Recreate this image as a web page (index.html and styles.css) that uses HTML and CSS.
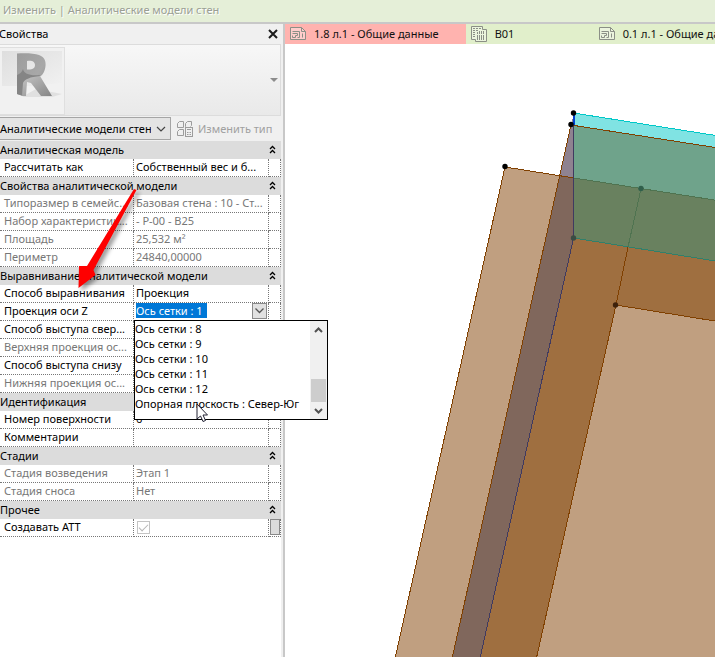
FILE: index.html
```
<!DOCTYPE html>
<html lang="ru">
<head>
<meta charset="utf-8">
<title>Аналитические модели стен</title>
<link rel="stylesheet" href="styles.css">
</head>
<body>
<header class="context-bar">Изменить | Аналитические модели стен</header>
<div class="workspace">
  <aside class="properties">
    <div class="panel-title">
      <h1>Свойства</h1>
      <button class="close" type="button" aria-label="Закрыть">
        <svg width="10" height="10" viewBox="0 0 10 10"><path d="M1 1L9 9M9 1L1 9" stroke="#1c1c1c" stroke-width="2"/></svg>
      </button>
    </div>
    <button class="type-selector" type="button" aria-label="Выбор типа">
      <span class="preview">
        <svg width="60" height="60" viewBox="0 0 60 60">
          <defs>
            <linearGradient id="sky" x1="0" y1="0" x2="1" y2="1"><stop offset="0" stop-color="#dedede"/><stop offset="1" stop-color="#f1f1f1"/></linearGradient>
            <linearGradient id="face" x1="0" y1="0" x2="1" y2="1"><stop offset="0" stop-color="#9c9c9c"/><stop offset=".6" stop-color="#a8a8a8"/><stop offset="1" stop-color="#8c8c8c"/></linearGradient>
            <linearGradient id="leg" x1="0" y1="0" x2="1" y2="1"><stop offset="0" stop-color="#c4c4c4"/><stop offset="1" stop-color="#858585"/></linearGradient>
          </defs>
          <rect width="60" height="60" fill="#f1f1f1"/>
          <path d="M0 0H60V32L30 35H0Z" fill="url(#sky)"/>
          <path d="M20 46L34 38L60 43L50 46Z" fill="#e0e0e0"/>
          <path fill-rule="evenodd" d="M15 2.500C22 2 32 2 37 4C43 6 44 11 43.500 15C43 20 41 24 38 25.500L29 27L21 31V45L15 43ZM25 10V18.500C29 19 33 18 33 14C33 10 29 9 25 10Z" fill="url(#face)"/>
          <path d="M15 24C18 23 20 21 21 18C22 23 28 25 38 24L37 26C31 27 26 27 23 31L21 45L15 43Z" fill="#858585"/>
          <path d="M20 45L21 32C23 28 28 26 38 25L50 45H39L29 32L25 31L24 45Z" fill="url(#leg)"/>
        </svg>
      </span>
      <svg class="drop-mark" width="8" height="4" viewBox="0 0 8 4"><path d="M0 0H8L4 4Z" fill="#8c8c8c"/></svg>
    </button>
    <div class="filter-row">
      <div class="filter">
        <select aria-label="Фильтр категорий"><option>Аналитические модели стен</option></select>
        <svg width="10" height="6" viewBox="0 0 10 6"><path d="M1 1L5 5L9 1" fill="none" stroke="#444" stroke-width="1.2"/></svg>
      </div>
      <button class="edit-type" type="button" disabled>
        <svg width="16" height="16" viewBox="0 0 16 16" fill="none" stroke="#9c9c9c">
          <path d="M.5 2.500L2.500 .5H6.500V6.500H.5ZM8.500 5.500V2.500L10.500 .5H14.500V4.500L13.500 5.500M8.500 5.500H9M.5 10.500L2.500 8.500H6.500M.5 10.500V14.500H6.500V8.500"/>
          <rect x="8.500" y="6.500" width="7" height="9"/><path d="M10 8.500H14M10 11.500H11.500M12.500 11.500H14M10 13.500H11.500M12.500 13.500H14"/>
        </svg>
        <span>Изменить тип</span>
      </button>
    </div>

    <svg class="defs" width="0" height="0" aria-hidden="true"><symbol id="fold" viewBox="0 0 7 9"><path d="M1 4L3.500 1.500L6 4M1 8L3.500 5.500L6 8" fill="none" stroke="#000" stroke-width="1.300"/></symbol></svg>
    <table class="grid">
      <colgroup><col class="col-name"><col class="col-value"><col class="col-link"></colgroup>
      <tbody>
        <tr class="group"><th colspan="2">Аналитическая модель</th><td><button type="button" aria-label="Свернуть"><svg><use href="#fold"/></svg></button></td></tr>
        <tr><th>Рассчитать как</th><td>Собственный вес и б...</td><td></td></tr>
        <tr class="group"><th colspan="2">Свойства аналитической модели</th><td><button type="button" aria-label="Свернуть"><svg><use href="#fold"/></svg></button></td></tr>
        <tr class="readonly"><th>Типоразмер в семейс...</th><td>Базовая стена : 10 - Ст...</td><td></td></tr>
        <tr class="readonly"><th>Набор характеристик...</th><td>- Р-00 - В25</td><td></td></tr>
        <tr class="readonly"><th>Площадь</th><td>25,532 м²</td><td></td></tr>
        <tr class="readonly"><th>Периметр</th><td>24840,00000</td><td></td></tr>
        <tr class="group"><th colspan="2">Выравнивание аналитической модели</th><td><button type="button" aria-label="Свернуть"><svg><use href="#fold"/></svg></button></td></tr>
        <tr><th>Способ выравнивания</th><td>Проекция</td><td></td></tr>
        <tr>
          <th><label for="axis-z">Проекция оси Z</label></th>
          <td class="editing">
            <div class="combo">
              <input id="axis-z" type="text" value="Ось сетки : 1">
              <button type="button" aria-label="Открыть список"><svg width="9" height="6" viewBox="0 0 9 6"><path d="M.5 .5L4.500 4.500L8.500 .5" fill="none" stroke="#555" stroke-width="1.300"/></svg></button>
            </div>
            <div class="dropdown">
              <ul role="listbox" aria-label="Проекция оси Z">
                <li role="option">Ось сетки : 8</li>
                <li role="option">Ось сетки : 9</li>
                <li role="option">Ось сетки : 10</li>
                <li role="option">Ось сетки : 11</li>
                <li role="option">Ось сетки : 12</li>
                <li role="option">Опорная плоскость : Север-Юг</li>
              </ul>
              <div class="scrollbar">
                <button type="button" aria-label="Вверх"><svg width="9" height="6" viewBox="0 0 9 6"><path d="M1 5L4.500 1.500L8 5" fill="none" stroke="#505050" stroke-width="2"/></svg></button>
                <span class="thumb"></span>
                <button type="button" aria-label="Вниз"><svg width="9" height="6" viewBox="0 0 9 6"><path d="M1 1L4.500 4.500L8 1" fill="none" stroke="#505050" stroke-width="2"/></svg></button>
              </div>
              <svg class="cursor" width="13" height="20" viewBox="0 0 13 20"><path d="M1 1V16L4.500 13L7 18.500L9.500 17.500L7 12H11.500Z" fill="#fff" stroke="#223" stroke-width="1"/></svg>
            </div>
          </td>
          <td></td>
        </tr>
        <tr><th>Способ выступа свер...</th><td></td><td></td></tr>
        <tr class="readonly"><th>Верхняя проекция ос...</th><td></td><td></td></tr>
        <tr><th>Способ выступа снизу</th><td></td><td></td></tr>
        <tr class="readonly"><th>Нижняя проекция ос...</th><td></td><td></td></tr>
        <tr class="group"><th colspan="2">Идентификация</th><td><button type="button" aria-label="Свернуть"><svg><use href="#fold"/></svg></button></td></tr>
        <tr><th>Номер поверхности</th><td>6</td><td></td></tr>
        <tr><th>Комментарии</th><td></td><td></td></tr>
        <tr class="group"><th colspan="2">Стадии</th><td><button type="button" aria-label="Свернуть"><svg><use href="#fold"/></svg></button></td></tr>
        <tr class="readonly"><th>Стадия возведения</th><td>Этап 1</td><td></td></tr>
        <tr class="readonly"><th>Стадия сноса</th><td>Нет</td><td></td></tr>
        <tr class="group"><th colspan="2">Прочее</th><td><button type="button" aria-label="Свернуть"><svg><use href="#fold"/></svg></button></td></tr>
        <tr><th><label for="att">Создавать АТТ</label></th><td><input id="att" class="check" type="checkbox" checked disabled></td><td><button class="link" type="button" aria-label="Связать с параметром"></button></td></tr>
      </tbody>
    </table>
    <svg class="arrow" width="80" height="120" viewBox="0 0 80 120">
      <path d="M65.500 4L22.500 84L24.500 89L7.500 102L8 80L16 80L63 3Z" fill="#fe0000"/>
    </svg>
  </aside>

  <main class="document">
    <svg class="defs" width="0" height="0" aria-hidden="true">
      <symbol id="sheet" viewBox="0 0 16 14"><path d="M.5 .5H11.500L15.500 4.500V12.500H.5Z" fill="#fff" fill-opacity=".35"/><path d="M11.500 .5V4.500H15.500M2.500 4.500H9.500V10.500H7.500M2.500 6.500H7.500V8.500H5.500V10.500H2.500V8.500M12.500 6.500V10.500"/></symbol>
      <symbol id="schedule" viewBox="0 0 16 16"><path d="M.5 .5H11.500V3.500H15.500V15.500H4.500V13.500H.5Z" fill="#fff" fill-opacity=".35"/><path d="M2 2.500H4M5 2.500H7M8 2.500H10M2 4.500H4M5 4.500H7M2 6.500H4M2 8.500H4M2 10.500H4M6.500 6V8M8.500 5V8M10.500 5V8M12.500 5V8M6.500 9V14M8.500 9V14M10.500 9V14M12.500 9V14"/></symbol>
    </svg>
    <nav class="tabs">
      <a class="tab active" href="#"><svg width="16" height="14"><use href="#sheet"/></svg><span>1.8 л.1 - Общие данные</span></a>
      <a class="tab" href="#"><svg width="16" height="16"><use href="#schedule"/></svg><span>В01</span></a>
      <a class="tab" href="#"><svg width="16" height="14"><use href="#sheet"/></svg><span>0.1 л.1 - Общие данные</span></a>
    </nav>
    <div class="view">
      <svg width="100%" height="100%" shape-rendering="crispEdges">
        <g transform="translate(-285 -44)">
          <path d="M505 167L559.500 175.500L341 1157H283.500Z" fill="#c09f80"/>
          <path d="M571 125L574 113V178L559.500 175.500Z" fill="#8f8290"/>
          <path d="M559.500 175.500L574 178V238L369 1157H341Z" fill="#80675c"/>
          <path d="M574 238L1715 424V1157H369Z" fill="#9f6f40"/>
          <path d="M616 305L1715 483V1157H424Z" fill="#c09f80"/>
          <path d="M574 113L1715 293.500V303.500L574 125.500Z" fill="#80e3e3"/>
          <path d="M574 125.500L1715 303.500V357L574 178Z" fill="#6fa38b"/>
          <path d="M574 178L1715 357V424L574 238Z" fill="#69815f"/>
          <g fill="none" stroke="#804000">
            <path d="M283.500 1157L505 167L574 178M341 1157L571 125L1715 303.500"/>
            <path d="M424 1157L616 305L1715 483M616 305L628 247"/>
          </g>
          <path d="M574 178L1715 357M641 189L628 247" fill="none" stroke="#4f7350"/>
          <path d="M574 238L1715 424" stroke="#30806b"/>
          <path d="M573.500 113L1715 293.500" stroke="#00c8c8"/>
          <path d="M573.500 125V238L369 1157" fill="none" stroke="#403a60"/>
          <path d="M573.500 113V125" stroke="#0040d0" stroke-width="2"/>
          <g shape-rendering="auto">
            <circle cx="573.500" cy="113" r="2.700"/><circle cx="571" cy="124.500" r="2.700"/><circle cx="505" cy="166.500" r="2.700"/>
            <circle cx="641" cy="188.500" r="2.700" fill="#305f4b"/><circle cx="573.500" cy="238" r="2.700" fill="#3b4c43"/><circle cx="615.500" cy="305" r="2.700" fill="#3d210b"/>
          </g>
        </g>
      </svg>
    </div>
  </main>
</div>
</body>
</html>
```

FILE: styles.css
```
* {
  box-sizing: border-box;
}

body {
  margin: 0;
  min-height: 100vh;
  display: flex;
  flex-direction: column;
  background: #fff;
  color: #000;
  font: 11px/18px "Noto Sans", "Open Sans", sans-serif;
  overflow: hidden;
}

button,
input,
select {
  margin: 0;
  padding: 0;
  border: 0;
  background: none;
  color: inherit;
  font: inherit;
}

svg {
  display: block;
  flex: none;
}

.defs {
  position: absolute;
}

.context-bar {
  height: 24px;
  padding: 0 3px;
  border-bottom: 2px solid #c8c8c8;
  background: #e5efd8;
  color: #9b9f95;
  line-height: 20px;
  text-shadow: 1px 1px 0 #fff;
  white-space: nowrap;
}

.workspace {
  flex: 1;
  display: flex;
}

/* Properties palette */
.properties {
  position: relative;
  flex: none;
  width: 285px;
  padding-right: 2px;
  border-right: 2px solid #c8c8c8;
  background: linear-gradient(#f0f0f0, #f0f0f0) right / 2px 100% no-repeat #fff;
}

.panel-title {
  display: flex;
  align-items: center;
  justify-content: space-between;
  height: 20px;
  padding-right: 3px;
  background: #f0f0f0;
}

.panel-title h1 {
  margin: 0 0 0 -1px;
  font-size: 11px;
  font-weight: 400;
}

.type-selector {
  display: flex;
  align-items: center;
  justify-content: space-between;
  width: 100%;
  height: 72px;
  padding-right: 2px;
  border: 1px solid #dcdcdc;
  border-left: 0;
  background: linear-gradient(#f7f7f7, #e9e9e9);
}

.preview {
  align-self: flex-start;
  margin-top: 2px;
  padding: 3px 2px;
  border: 1px solid #dfdfdf;
  border-left: 0;
  background: #f1f1f1;
}

.filter-row {
  display: flex;
  align-items: center;
  gap: 6px;
  height: 25px;
  background: #f0f0f0;
}

.filter {
  display: flex;
  align-items: center;
  width: 171px;
  height: 23px;
  padding-right: 4px;
  border: 1px solid #a5a5a5;
  border-left: 0;
  background: #e4e4e4;
}

.filter select {
  flex: 1;
  min-width: 0;
  height: 21px;
  margin-right: 5px;
  appearance: none;
  overflow: hidden;
  text-overflow: clip;
}

.edit-type {
  display: flex;
  align-items: center;
  gap: 5px;
  color: #a0a0a0;
}

.grid {
  width: 281px;
  table-layout: fixed;
  border-collapse: separate;
  border-spacing: 0;
}

.col-name {
  width: 134px;
}

.col-link {
  width: 12px;
}

.grid th,
.grid td {
  height: 18px;
  padding: 0 0 0 2px;
  border-right: 1px dotted #777;
  border-bottom: 1px dotted #777;
  line-height: 15px;
  font-weight: 400;
  text-align: left;
  vertical-align: top;
  white-space: nowrap;
  overflow: hidden;
}

.grid th {
  padding-left: 4px;
}

.grid td:last-child {
  padding: 0;
}

.grid .readonly {
  color: #777;
}

.grid .group th,
.grid .group td {
  padding: 0;
  border: 0;
  background: #dcdcdc;
  line-height: 17px;
}

.group td button {
  display: block;
  padding-top: 4px;
}

.group td svg {
  width: 7px;
  height: 9px;
}

.grid .editing {
  position: relative;
  overflow: visible;
}

.combo {
  display: flex;
  justify-content: space-between;
  height: 17px;
  padding-right: 1px;
}

.combo input {
  width: 71px;
  height: 15px;
  background: #0078d7;
  color: #fff;
}

.combo button {
  display: flex;
  align-items: center;
  justify-content: center;
  width: 15px;
  height: 16px;
  border: 1px solid #8a8a8a;
  background: #e1e1e1;
}

.dropdown {
  position: absolute;
  z-index: 2;
  top: 17px;
  left: 0;
  display: flex;
  width: 194px;
  height: 100px;
  border: 1px solid #000;
  background: #fff;
}

.dropdown ul {
  flex: 1;
  min-width: 0;
  margin: 0;
  padding: 0;
  list-style: none;
}

.dropdown li {
  line-height: 15px;
}

.scrollbar {
  flex: none;
  display: flex;
  flex-direction: column;
  align-items: center;
  width: 17px;
  background: #f0f0f0;
}

.scrollbar button {
  display: flex;
  align-items: center;
  justify-content: center;
  width: 17px;
  height: 17px;
}

.thumb {
  width: 15px;
  height: 23px;
  margin-top: auto;
  background: #cdcdcd;
}

.cursor {
  position: absolute;
  top: 82px;
  left: 61px;
}

.check {
  display: block;
  width: 13px;
  height: 13px;
  margin: 2px 0 0 1px;
  border: 1px solid #c4c4c4;
  appearance: none;
  background: #fff;
}

.check:checked::after {
  content: "";
  display: block;
  width: 8px;
  height: 4px;
  margin: 2px 1px;
  border: solid #b5b5b5;
  border-width: 0 0 1px 1px;
  transform: rotate(-45deg);
}

.link {
  display: block;
  width: 10px;
  height: 16px;
  margin-left: 1px;
  border: 1px solid #8a8a8a;
  background: #dcdcdc;
}

.arrow {
  position: absolute;
  z-index: 1;
  top: 162px;
  left: 71px;
  filter: drop-shadow(3px 3px 2px rgba(0, 0, 0, 0.4));
  pointer-events: none;
}

/* Drawing area */
.document {
  flex: 1;
  min-width: 0;
  display: flex;
  flex-direction: column;
}

.tabs {
  display: flex;
  height: 20px;
  overflow: hidden;
  background: #e1efcb;
}

.tab {
  display: flex;
  flex: none;
  align-items: center;
  gap: 8px;
  min-width: 128px;
  padding: 0 27px 0 5px;
  color: #111;
  text-decoration: none;
  white-space: nowrap;
}

.tab.active {
  background: #ffb3af;
}

.tab svg {
  fill: none;
  stroke: #8b8f86;
}

.view {
  flex: 1;
  min-height: 0;
  position: relative;
  overflow: hidden;
}

.view svg {
  position: absolute;
  inset: 0;
}
```
